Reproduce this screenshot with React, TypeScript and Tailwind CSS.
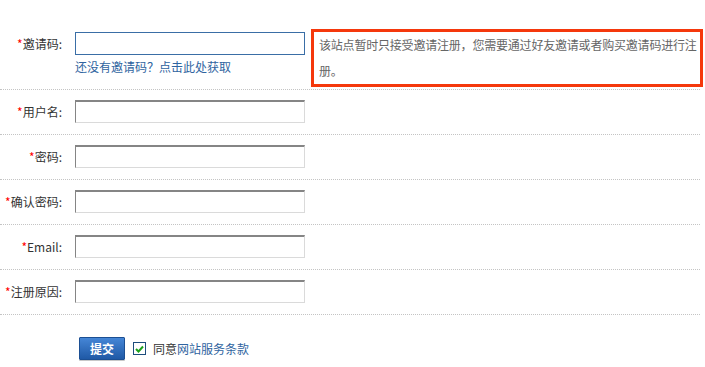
const FONT = { fontFamily: '"Noto Sans CJK SC", "Liberation Sans", sans-serif' };

const Label = ({ text }: { text: string }) => (
  <div className="w-[62px] shrink-0 text-right text-[12px] leading-[23px] text-[#333] whitespace-nowrap">
    <span className="text-[#f00]">*</span>
    {text}:
  </div>
);

const Field = ({ label }: { label: string }) => (
  <div className="flex items-center h-[45px] pt-[10px] pb-[11px] border-b border-dotted border-[#c4c4c4] box-border">
    <Label text={label} />
    <input
      type="text"
      className="ml-[13px] w-[230px] h-[23px] bg-white border border-t-2 border-t-[#858585] border-l-[#858585] border-r-[#dadada] border-b-[#dadada] outline-none"
    />
  </div>
);

const fields = ["用户名", "密码", "确认密码", "Email", "注册原因"];

export default function App() {
  return (
    <div className="w-[705px] h-[367px] bg-white overflow-hidden" style={FONT}>
      <div className="w-[700px]">
        <div className="flex items-start pt-[29px] pb-[2px] border-b border-dotted border-[#c4c4c4]">
          <div className="mt-[3px]">
            <Label text="邀请码" />
          </div>
          <div className="ml-[13px] mt-[3px] w-[230px] shrink-0">
            <input
              type="text"
              className="block w-[230px] h-[23px] bg-white border border-[#3a6ea6] outline-none"
            />
            <a className="block text-[12px] leading-[24px] text-[#2f64a0] whitespace-nowrap cursor-pointer">
              还没有邀请码？点击此处获取
            </a>
          </div>
          <div className="ml-[6px] w-[392px] h-[58px] shrink-0 border-[3px] border-[#f5380c] pl-[5px] box-border">
            <div className="w-[390px] text-[12px] leading-[26px] tracking-[-0.2px] text-[#666]">
              该站点暂时只接受邀请注册，您需要通过好友邀请或者购买邀请码进行注册。
            </div>
          </div>
        </div>
        {fields.map((f) => (
          <Field key={f} label={f} />
        ))}
        <div className="flex items-center pt-[22px] pl-[79px]">
          <button className="w-[46px] h-[23px] rounded-[1px] border border-[#1c4f93] bg-gradient-to-b from-[#4586d6] to-[#1f59a6] text-white text-[12px] font-bold shadow-[0_1px_0_#c8c8c8]">
            提交
          </button>
          <div className="ml-[8px] w-[13px] h-[13px] border border-[#1d4d7d] bg-white flex items-center justify-center">
            <svg width="9" height="8" viewBox="0 0 9 8">
              <path d="M1 4 L3.5 6.5 L8 1.5" fill="none" stroke="#1ba11b" strokeWidth="2" />
            </svg>
          </div>
          <span className="ml-[7px] text-[12px] text-[#333]">
            同意<a className="text-[#2f64a0] cursor-pointer">网站服务条款</a>
          </span>
        </div>
      </div>
    </div>
  );
}
